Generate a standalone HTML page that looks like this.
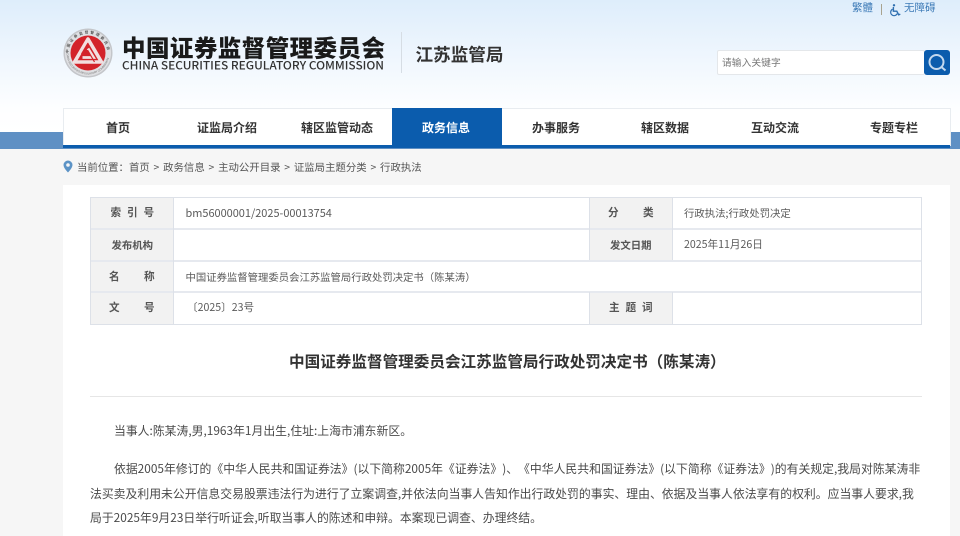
<!DOCTYPE html>
<html lang="zh-CN">
<head>
<meta charset="utf-8">
<title>中国证券监督管理委员会江苏监管局行政处罚决定书（陈某涛）</title>
<style>
html,body{margin:0;padding:0;width:960px;height:536px;overflow:hidden;background:#f6f6f6}
body{font-family:"Noto Sans CJK SC","Liberation Sans",sans-serif;color:#333;text-spacing-trim:space-all}
#w{position:relative;width:960px;height:536px;overflow:hidden;filter:blur(.25px)}
.a{position:absolute;white-space:nowrap}
.top{position:absolute;left:0;top:0;width:960px;height:132px;background:linear-gradient(#deedfb 0,#f0f7fe 60px,#fdfeff 108px,#fff 132px)}
.band{position:absolute;left:0;top:132px;width:960px;height:17px;background:#5f90c4}
.nav{position:absolute;left:63px;top:108px;width:886px;height:37px;background:#fff;border:1px solid #e8ecf0;border-bottom:0}
.navline{position:absolute;left:63px;top:145px;width:887px;height:3px;background:#0b5cad}
.active{position:absolute;left:392px;top:108px;width:110px;height:38px;background:#0b5cad}
.n{position:absolute;top:119px;height:17px;line-height:17px;font-size:12px;font-weight:700;color:#333;text-align:center;white-space:nowrap}
.content{position:absolute;left:63px;top:185px;width:887px;height:351px;background:#fff}
.tb{position:absolute;left:90px;top:197px;width:832px;height:128px;box-sizing:border-box;border:1px solid #dde1e8}
.hl{position:absolute;height:2px;background:#e6e9ef}
.vl{position:absolute;width:1px;background:#dde1e8}
.th{position:absolute;background:#f2f2f2}
.lab{position:absolute;font-size:10.6px;font-weight:700;color:#555;line-height:14px;white-space:nowrap}
.val{position:absolute;font-size:10.37px;color:#5a5a5a;line-height:14px;white-space:nowrap}
.p{position:absolute;font-size:11.85px;line-height:16px;color:#4a4a4a;white-space:nowrap}
</style>
</head>
<body>
<div id="w">
<div class="top"></div>
<div class="band"></div>

<!-- top links -->
<div class="a" style="left:852px;top:1px;font-size:10.5px;line-height:14px;color:#3f7cb8">繁體</div>
<div class="a" style="left:881px;top:4px;width:1px;height:11px;background:#a9a38f"></div>
<svg class="a" style="left:890px;top:4px" width="12" height="13" viewBox="0 0 12 13">
<circle cx="4" cy="1.3" r="1.2" fill="#2f6fb0"/>
<path d="M3.4 3v4.2h3.400l1.900 3.600 1.600-.7" fill="none" stroke="#2f6fb0" stroke-width="1.400"/>
<path d="M2.600 5.200a3.400 3.400 0 1 0 4.600 4.400" fill="none" stroke="#2f6fb0" stroke-width="1.200"/>
</svg>
<div class="a" style="left:904px;top:1px;font-size:10.500px;line-height:14px;color:#3f7cb8">无障碍</div>

<!-- emblem -->
<svg class="a" style="left:63px;top:28px" width="50" height="50" viewBox="0 0 50 50">
<defs>
<path id="ring" d="M5.500 25a19.500 19.500 0 0 1 39 0"/>
<path id="ring2" d="M3.500 25a21.500 21.500 0 0 0 43 0"/>
</defs>
<circle cx="25" cy="25" r="24.500" fill="#c4c6ca"/>
<circle cx="25" cy="25" r="23" fill="#dfe0e3"/>
<text font-size="3.600" font-weight="700" fill="#555" font-family="'Noto Sans CJK SC',sans-serif"><textPath href="#ring" textLength="58">中国证券监督管理委员会</textPath></text>
<text font-size="2.800" fill="#777" font-family="'Liberation Sans',sans-serif"><textPath href="#ring2" textLength="62">CHINA SECURITIES REGULATORY COMMISSION</textPath></text>
<circle cx="25" cy="25" r="17.500" fill="#d3232a"/>
<path d="M25 11 38.500 34H11.500Z" fill="none" stroke="#f2dfe0" stroke-width="3.600" stroke-linejoin="round"/>
<path d="M25 20.500 30.500 29.500H19.500" fill="none" stroke="#f2dfe0" stroke-width="2.800"/>
<path d="M18.500 26 25 15" stroke="#d3232a" stroke-width="1.200"/>
<path d="M31.500 34 24.500 22" stroke="#d3232a" stroke-width="1.200"/>
</svg>

<!-- logo text -->
<svg class="a" style="left:118px;top:30px;overflow:visible" width="400" height="44">
<text x="4" y="26.500" font-family="'Noto Sans CJK SC',sans-serif" font-weight="900" font-size="23.500" fill="#1a1a1a" textLength="263" lengthAdjust="spacing">中国证券监督管理委员会</text>
<text x="4" y="39.500" font-family="'Noto Sans CJK SC',sans-serif" font-weight="500" font-size="11.300" fill="#333" textLength="262" lengthAdjust="spacingAndGlyphs">CHINA SECURITIES REGULATORY COMMISSION</text>
<text x="297.500" y="31" font-family="'Noto Sans CJK SC',sans-serif" font-weight="700" font-size="17.600" fill="#333" textLength="88" lengthAdjust="spacing">江苏监管局</text>
</svg>
<div class="a" style="left:401px;top:32px;width:1px;height:41px;background:#d6dde4"></div>

<!-- search -->
<div class="a" style="left:717px;top:50px;width:208px;height:25px;box-sizing:border-box;background:#fff;border:1px solid #e4e7ea;border-radius:2px"></div>
<div class="a" style="left:722px;top:55px;font-size:9.800px;line-height:14px;color:#777">请输入关键字</div>
<svg class="a" style="left:924px;top:50px" width="26" height="25" viewBox="0 0 26 25">
<rect width="26" height="25" rx="3" fill="#0b5cad"/>
<circle cx="12.500" cy="12" r="7" fill="none" stroke="#c3d8ee" stroke-width="2"/>
<path d="M18 17.500l3.500 3" stroke="#c3d8ee" stroke-width="2"/>
</svg>

<!-- nav -->
<div class="nav"></div>
<div class="navline"></div>
<div class="active"></div>
<div class="n" style="left:63px;width:110px">首页</div>
<div class="n" style="left:172px;width:110px">证监局介绍</div>
<div class="n" style="left:282px;width:110px">辖区监管动态</div>
<div class="n" style="left:391px;width:110px;color:#fff">政务信息</div>
<div class="n" style="left:501px;width:110px">办事服务</div>
<div class="n" style="left:610px;width:110px">辖区数据</div>
<div class="n" style="left:720px;width:110px">互动交流</div>
<div class="n" style="left:839px;width:110px">专题专栏</div>

<!-- breadcrumb -->
<svg class="a" style="left:63px;top:160px" width="10" height="13" viewBox="0 0 10 13">
<path d="M5 .5a4.500 4.500 0 0 1 4.500 4.500C9.500 8 5 12.500 5 12.500S.5 8 .5 5A4.500 4.500 0 0 1 5 .5Z" fill="#5c93c6"/>
<circle cx="5" cy="5" r="1.800" fill="#f6f6f6"/>
</svg>
<div class="a" style="left:77px;top:160px;font-size:10.400px;line-height:14px;color:#555;word-spacing:1.500px">当前位置：首页 &gt; 政务信息 &gt; 主动公开目录 &gt; 证监局主题分类 &gt; 行政执法</div>

<!-- content -->
<div class="content"></div>

<!-- meta table -->
<div class="tb"></div>
<div class="th" style="left:91px;top:198px;width:82px;height:126px"></div>
<div class="th" style="left:590px;top:198px;width:82px;height:62px"></div>
<div class="th" style="left:590px;top:293px;width:82px;height:31px"></div>
<div class="hl" style="left:91px;top:228px;width:830px"></div>
<div class="hl" style="left:91px;top:260px;width:830px"></div>
<div class="hl" style="left:91px;top:291px;width:830px"></div>
<div class="vl" style="left:173px;top:198px;height:126px"></div>
<div class="vl" style="left:589px;top:198px;height:62px"></div>
<div class="vl" style="left:672px;top:198px;height:62px"></div>
<div class="vl" style="left:589px;top:292px;height:32px"></div>
<div class="vl" style="left:672px;top:292px;height:32px"></div>

<div class="lab" style="left:110.500px;top:206px;letter-spacing:5.900px">索引号</div>
<div class="lab" style="left:111.500px;top:238px;font-size:10.400px">发布机构</div>
<div class="lab" style="left:109px;top:270px">名</div>
<div class="lab" style="left:144px;top:270px">称</div>
<div class="lab" style="left:109px;top:301px">文</div>
<div class="lab" style="left:144px;top:301px">号</div>
<div class="lab" style="left:608px;top:206px">分</div>
<div class="lab" style="left:643px;top:206px">类</div>
<div class="lab" style="left:610px;top:238px;font-size:10.400px">发文日期</div>
<div class="lab" style="left:609px;top:301px;letter-spacing:5.900px">主题词</div>

<div class="val" style="left:185.500px;top:206px;font-size:10.950px">bm56000001/2025-00013754</div>
<div class="val" style="left:684px;top:206px;font-size:10.400px">行政执法;行政处罚决定</div>
<div class="val" style="left:684px;top:238px;font-size:10.600px">2025年11月26日</div>
<div class="val" style="left:185.500px;top:270px">中国证券监督管理委员会江苏监管局行政处罚决定书（陈某涛）</div>
<div class="val" style="left:187px;top:301px;font-size:10.600px">〔2025〕23号</div>

<!-- title -->
<div class="a" style="left:289px;top:351px;font-size:15.600px;line-height:21px;font-weight:700;color:#333">中国证券监督管理委员会江苏监管局行政处罚决定书（陈某涛）</div>
<div class="a" style="left:90px;top:396px;width:832px;height:1px;background:#e6e6e6"></div>

<!-- body -->
<div class="p" style="left:114px;top:423px">当事人:陈某涛,男,1963年1月出生,住址:上海市浦东新区。</div>
<div class="p" style="left:114px;top:461px">依据2005年修订的《中华人民共和国证券法》(以下简称2005年《证券法》)、《中华人民共和国证券法》(以下简称《证券法》)的有关规定,我局对陈某涛非</div>
<div class="p" style="left:90px;top:486px">法买卖及利用未公开信息交易股票违法行为进行了立案调查,并依法向当事人告知作出行政处罚的事实、理由、依据及当事人依法享有的权利。应当事人要求,我</div>
<div class="p" style="left:90px;top:510px">局于2025年9月23日举行听证会,听取当事人的陈述和申辩。本案现已调查、办理终结。</div>
</div>
</body>
</html>
